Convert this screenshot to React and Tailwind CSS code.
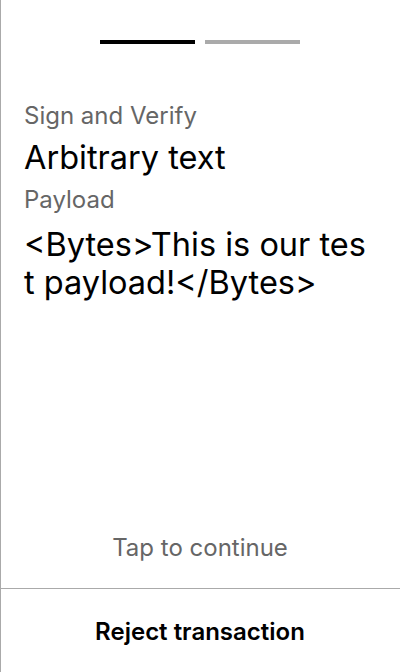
export default function App() {
  return (
    <div
      className="flex h-[672px] w-[400px] flex-col bg-white text-black shadow-[inset_1px_0_0_#aaaaaa]"
      style={{ fontFamily: "Inter, 'Noto Sans', sans-serif" }}
    >
      <div className="flex justify-center gap-[10px] pt-10">
        <div className="h-1 w-[95px] bg-black" />
        <div className="h-1 w-[95px] bg-[#aaaaaa]" />
      </div>
      <div className="flex flex-col pl-6 pr-[30px] pt-[56px]">
        <div className="text-[24px] leading-[32px] text-[#666666]">Sign and Verify</div>
        <div className="mt-[6px] text-[32.5px] leading-[40px]">Arbitrary text</div>
        <div className="mt-[6px] text-[24px] leading-[32px] text-[#666666]">Payload</div>
        <div className="mt-[10px] break-all text-[32.5px] leading-[38px]">
          &lt;Bytes&gt;This is our test payload!&lt;/Bytes&gt;
        </div>
      </div>
      <div className="flex-1" />
      <div className="pb-[24px] text-center text-[24px] leading-[32px] text-[#666666]">Tap to continue</div>
      <div className="flex h-[84px] items-center justify-center border-t border-[#aaaaaa] pt-[2px] text-[24px] font-semibold">
        Reject transaction
      </div>
    </div>
  );
}
